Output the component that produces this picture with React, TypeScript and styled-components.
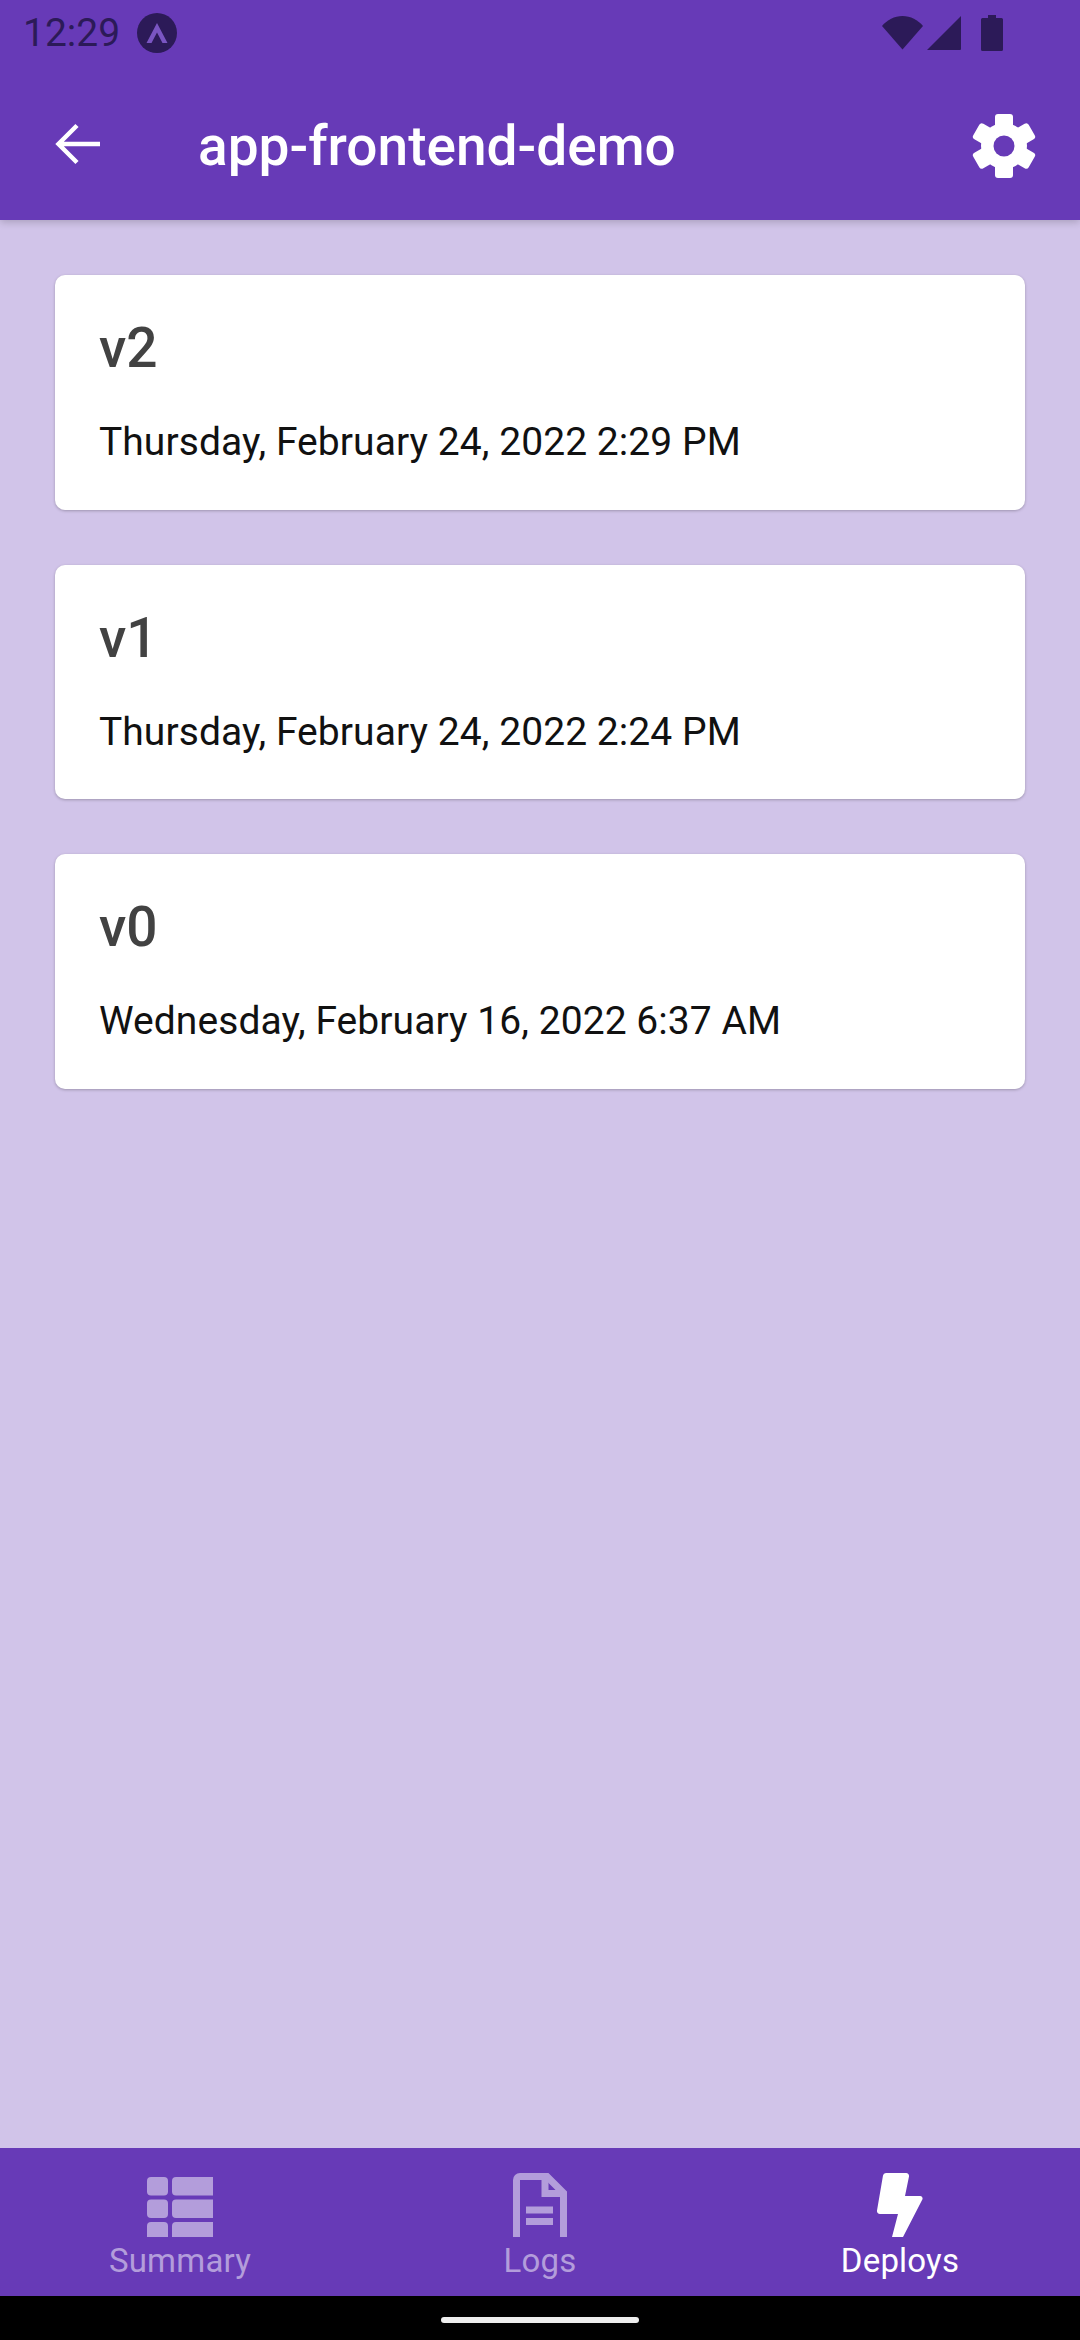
import React from 'react';
import styled, { createGlobalStyle } from 'styled-components';

const GlobalStyle = createGlobalStyle`
  html, body {
    margin: 0;
    padding: 0;
    height: 2340px;
    overflow: hidden;
    background: #d1c4e9;
  }
  * { box-sizing: border-box; }
`;

const DEPLOYS = [
  { version: 'v2', date: 'Thursday, February 24, 2022 2:29 PM' },
  { version: 'v1', date: 'Thursday, February 24, 2022 2:24 PM' },
  { version: 'v0', date: 'Wednesday, February 16, 2022 6:37 AM' },
];

const PURPLE = '#673ab7';
const INK = '#2c1a58';

const BackIcon = () => (
  <svg width="46" height="46" viewBox="0 0 46 46" fill="none" stroke="#fff" strokeWidth="4.500">
    <path d="M45 21H4M22 2.500L3.500 21 22 39.500" />
  </svg>
);

const GearIcon = () => (
  <svg width="64" height="64" viewBox="0 0 64 64" fill="#fff">
    <rect x="23" y="0" width="18" height="64" rx="3" />
    <rect x="23" y="0" width="18" height="64" rx="3" transform="rotate(60 32 32)" />
    <rect x="23" y="0" width="18" height="64" rx="3" transform="rotate(120 32 32)" />
    <circle cx="32" cy="32" r="23" />
    <circle cx="32" cy="32" r="10.500" fill={PURPLE} />
  </svg>
);

const WifiIcon = () => (
  <svg width="41" height="34" viewBox="0 0 41 34" fill={INK}>
    <path d="M20.500 33.500L0 10C5 4 12.500 0 20.500 0s15.500 4 20.500 10z" />
  </svg>
);

const SignalIcon = () => (
  <svg width="34" height="34" viewBox="0 0 34 34" fill={INK}>
    <path d="M34 0v33a1 1 0 0 1-1 1H0z" />
  </svg>
);

const BatteryIcon = () => (
  <svg width="22" height="36" viewBox="0 0 22 36" fill={INK}>
    <path d="M7 0h8v3h5.500a1.500 1.500 0 0 1 1.500 1.500V34.500a1.500 1.500 0 0 1-1.500 1.500H1.500A1.500 1.500 0 0 1 0 34.500V4.500A1.500 1.500 0 0 1 1.500 3H7z" />
  </svg>
);

const ExpoIcon = () => (
  <svg width="40" height="40" viewBox="0 0 40 40">
    <circle cx="20" cy="20" r="20" fill={INK} />
    <path d="M20 10L30.500 30h-5L20 19.500 14.500 30h-5z" fill="#7a55c2" />
  </svg>
);

const TableIcon = () => (
  <svg width="66" height="60" viewBox="0 0 66 60" fill="currentColor">
    <rect x="0" y="0" width="21" height="18.500" rx="4" />
    <path d="M25 4a4 4 0 0 1 4-4h37v18.500H29a4 4 0 0 1-4-4z" />
    <rect x="0" y="22.500" width="21" height="18.500" rx="4" />
    <path d="M25 26.500a4 4 0 0 1 4-4h37V41H29a4 4 0 0 1-4-4z" />
    <path d="M0 49a4 4 0 0 1 4-4h13a4 4 0 0 1 4 4v11H0z" />
    <path d="M25 49a4 4 0 0 1 4-4h37v15H25z" />
  </svg>
);

const FileIcon = () => (
  <svg width="54" height="64" viewBox="0 0 54 64" fill="none" stroke="currentColor" strokeWidth="7">
    <path d="M3.500 64V7a3.500 3.500 0 0 1 3.500-3.500h27L50.500 20v44" />
    <path d="M32 4v16.500h18" />
    <path d="M13 37h27M13 48.500h27" />
  </svg>
);

const BoltIcon = () => (
  <svg width="46" height="64" viewBox="0 0 46 64" fill="currentColor">
    <path d="M6 2.500A3 3 0 0 1 9 0h20a3 3 0 0 1 3 3.500L28 23h15a2.500 2.500 0 0 1 2.200 3.800L26 64H15l6-23H3a3 3 0 0 1-3-3.500z" />
  </svg>
);

const Screen = styled.div`
  width: 1080px;
  height: 2340px;
  display: flex;
  flex-direction: column;
  background: #d1c4e9;
  font-family: Roboto, "Liberation Sans", sans-serif;
  overflow: hidden;
`;

const Header = styled.header`
  height: 220px;
  flex-shrink: 0;
  background: ${PURPLE};
  display: flex;
  flex-direction: column;
  box-shadow: 0 2px 8px rgba(0, 0, 0, 0.2);
  position: relative;
`;

const StatusBar = styled.div`
  height: 66px;
  padding: 0 77px 0 23px;
  display: flex;
  align-items: center;
  justify-content: space-between;
`;

const StatusLeft = styled.div`
  display: flex;
  align-items: center;
  gap: 17px;
`;

const StatusRight = styled.div`
  display: flex;
  align-items: center;
  gap: 4px;
`;

const BatterySlot = styled.div`
  display: flex;
  margin-left: 16px;
`;

const Clock = styled.span`
  font-size: 39px;
  font-weight: 400;
  color: ${INK};
  line-height: 66px;
`;

const Toolbar = styled.div`
  flex: 1;
  display: flex;
  align-items: center;
  padding: 6px 44px 0 55px;
`;

const Title = styled.h1`
  flex: 1;
  margin: 0 0 0 97px;
  font-size: 55px;
  font-weight: 500;
  color: #fff;
`;

const Content = styled.main`
  flex: 1;
  display: flex;
  flex-direction: column;
  gap: 55px;
  padding: 55px;
`;

const Card = styled.article`
  height: 234.5px;
  padding: 38px 44px 0;
  background: #fff;
  border-radius: 10px;
  box-shadow: 0 1px 3px rgba(0, 0, 0, 0.25);
`;

const Version = styled.h2`
  margin: 0;
  font-size: 55px;
  line-height: 70px;
  font-weight: 500;
  color: #424242;
`;

const DeployDate = styled.p`
  margin: 34px 0 0;
  font-size: 39px;
  line-height: 50px;
  letter-spacing: 0.06px;
  color: #111;
`;

const TabBar = styled.nav`
  height: 148px;
  flex-shrink: 0;
  background: ${PURPLE};
  display: grid;
  grid-template-columns: repeat(3, 1fr);
`;

const Tab = styled.div<{ $active?: boolean }>`
  display: flex;
  flex-direction: column;
  align-items: center;
  margin-top: 25px;
  color: ${(p) => (p.$active ? '#fff' : '#b39ddb')};
`;

const TabIcon = styled.div`
  height: 64px;
  display: flex;
  align-items: flex-end;
`;

const TabLabel = styled.span`
  font-size: 33px;
  line-height: 42px;
  letter-spacing: 0.2px;
  margin-top: 3px;
`;

const NavBar = styled.div`
  height: 44px;
  flex-shrink: 0;
  background: #000;
  display: flex;
  justify-content: center;
  padding-top: 21px;
`;

const HomePill = styled.div`
  width: 198px;
  height: 6px;
  border-radius: 3px;
  background: #eeeeee;
`;

export default function App() {
  return (
    <Screen>
      <GlobalStyle />
      <Header>
        <StatusBar>
          <StatusLeft>
            <Clock>12:29</Clock>
            <ExpoIcon />
          </StatusLeft>
          <StatusRight>
            <WifiIcon />
            <SignalIcon />
            <BatterySlot>
              <BatteryIcon />
            </BatterySlot>
          </StatusRight>
        </StatusBar>
        <Toolbar>
          <BackIcon />
          <Title>app-frontend-demo</Title>
          <GearIcon />
        </Toolbar>
      </Header>
      <Content>
        {DEPLOYS.map((d) => (
          <Card key={d.version}>
            <Version>{d.version}</Version>
            <DeployDate>{d.date}</DeployDate>
          </Card>
        ))}
      </Content>
      <TabBar>
        <Tab>
          <TabIcon><TableIcon /></TabIcon>
          <TabLabel>Summary</TabLabel>
        </Tab>
        <Tab>
          <TabIcon><FileIcon /></TabIcon>
          <TabLabel>Logs</TabLabel>
        </Tab>
        <Tab $active>
          <TabIcon><BoltIcon /></TabIcon>
          <TabLabel>Deploys</TabLabel>
        </Tab>
      </TabBar>
      <NavBar>
        <HomePill />
      </NavBar>
    </Screen>
  );
}
